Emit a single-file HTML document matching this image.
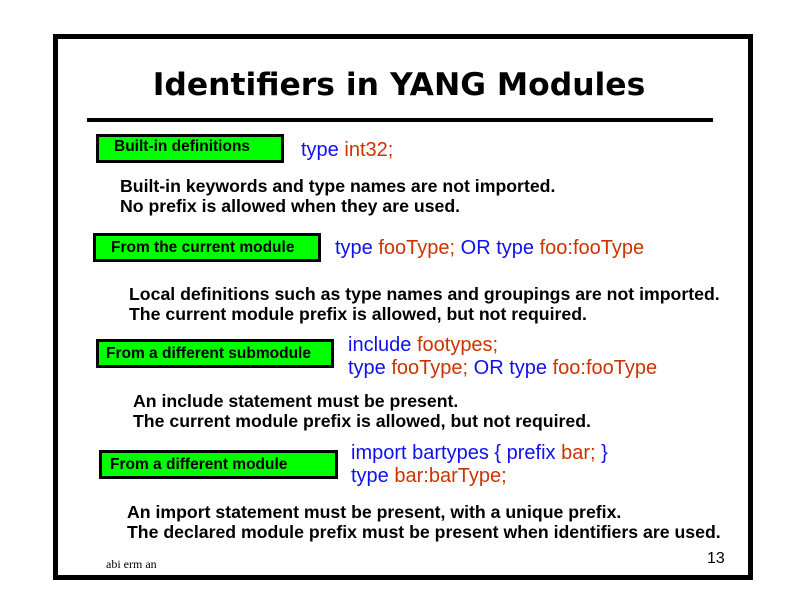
<!DOCTYPE html>
<html><head><meta charset="utf-8"><style>
body{margin:0;width:800px;height:600px;background:#fff;position:relative;overflow:hidden;font-family:"Liberation Sans",sans-serif}
.a{position:absolute;white-space:nowrap}
.frame{position:absolute;left:53px;top:34px;width:690px;height:536px;border:5px solid #000}
.t{font-family:"DejaVu Sans",sans-serif;font-weight:bold;font-size:31.4px;left:0;width:798px;text-align:center;top:67px}
.rule{position:absolute;left:87px;top:118px;width:626px;height:4px;background:#000}
.box{position:absolute;background:#00ff00;border:3px solid #000;box-sizing:border-box;font-weight:bold;font-size:15.5px;line-height:22px}
.c{font-size:20px;line-height:23px}
.b{color:#1010ee}.r{color:#cc3300}
.p{font-weight:bold;font-size:17.7px;line-height:20px}
</style></head><body>
<div class="frame"></div>
<div class="a t">Identifiers in YANG Modules</div>
<div class="rule"></div>

<div class="box" style="left:96px;top:134px;width:188px;height:29px;padding-left:15px;line-height:20px">Built-in definitions</div>
<div class="a c" style="left:301px;top:139px"><span class="b">type</span> <span class="r">int32;</span></div>
<div class="a p" style="left:120px;top:176px">Built-in keywords and type names are not imported.<br>No prefix is allowed when they are used.</div>

<div class="box" style="left:93px;top:233px;width:228px;height:29px;padding-left:15px;line-height:24px">From the current module</div>
<div class="a c" style="left:335px;top:237px"><span class="b">type</span> <span class="r">fooType;</span> <span class="b">OR type</span> <span class="r">foo:fooType</span></div>
<div class="a p" style="left:129px;top:284px">Local definitions such as type names and groupings are not imported.<br>The current module prefix is allowed, but not required.</div>

<div class="box" style="left:96px;top:339px;width:238px;height:29px;padding-left:7px;line-height:24px">From a different submodule</div>
<div class="a c" style="left:348px;top:334px"><span class="b">include</span> <span class="r">footypes;</span><br><span class="b">type</span> <span class="r">fooType;</span> <span class="b">OR type</span> <span class="r">foo:fooType</span></div>
<div class="a p" style="left:133px;top:391px">An include statement must be present.<br>The current module prefix is allowed, but not required.</div>

<div class="box" style="left:99px;top:450px;width:239px;height:29px;padding-left:8px;line-height:24px">From a different module</div>
<div class="a c" style="left:351px;top:442px"><span class="b">import bartypes {</span> <span class="b">prefix</span> <span class="r">bar;</span> <span class="b">}</span><br><span class="b">type</span> <span class="r">bar:barType;</span></div>
<div class="a p" style="left:127px;top:502px">An import statement must be present, with a unique prefix.<br>The declared module prefix must be present when identifiers are used.</div>

<div class="a" style="left:106px;top:557px;font-family:'Liberation Serif',serif;font-size:12px">abi erm an</div>
<div class="a" style="left:707px;top:550px;font-size:16px">13</div>
</body></html>
